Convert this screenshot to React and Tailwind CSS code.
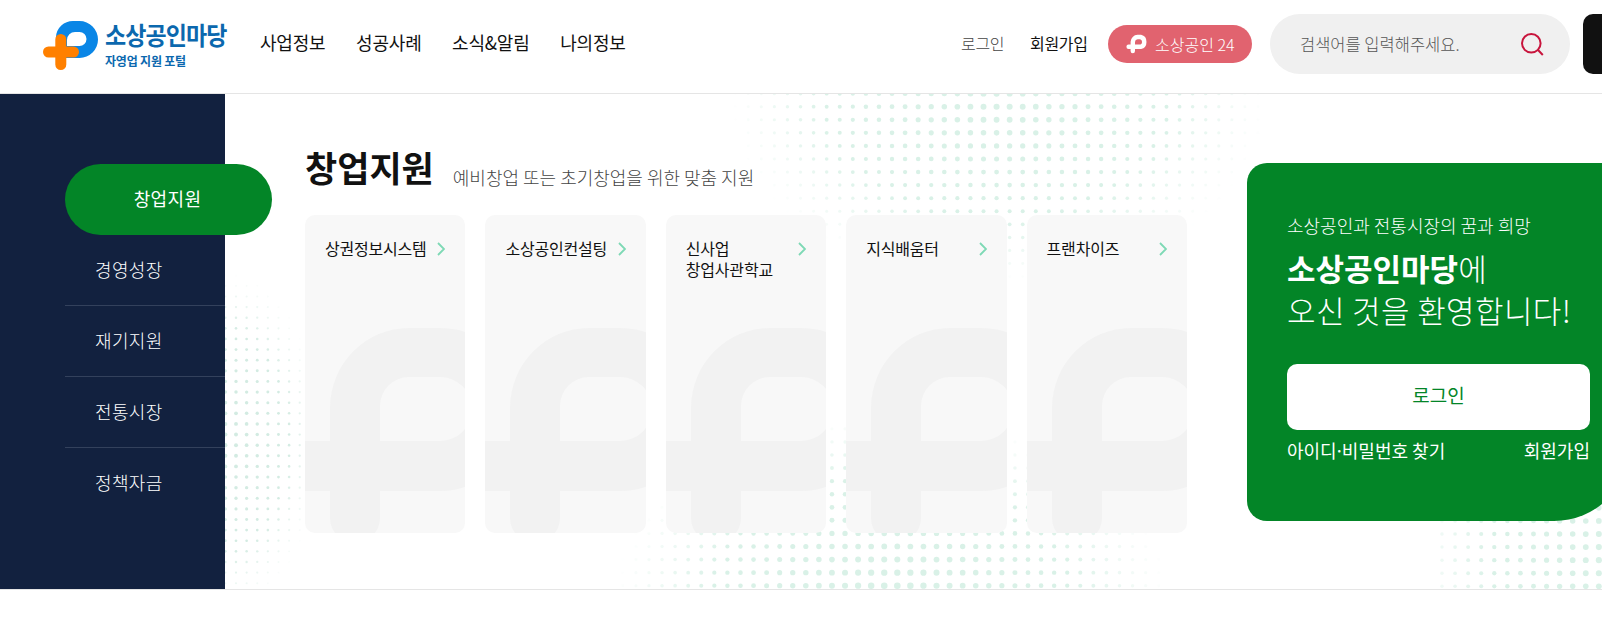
import React from "react";

const navItems = ["사업정보", "성공사례", "소식&알림", "나의정보"];

const sideItems = ["창업지원", "경영성장", "재기지원", "전통시장", "정책자금"];

const cards = [
    ["상권정보시스템"],
    ["소상공인컨설팅"],
    ["신사업", "창업사관학교"],
    ["지식배움터"],
    ["프랜차이즈"],
];

// Halftone clusters behind the main section (section coordinates)
const dotClusters = [
    { x: 944.3, y: 12.7, pitch: 13.07, cx: 998, cy: 8, rx: 268, ry: 180, max: 3.1, color: "#d9f1e7" },
    { x: 858.1, y: 491.7, pitch: 13.07, cx: 892, cy: 500, rx: 276, ry: 180, max: 3.4, color: "#d9f1e7" },
    { x: 1442, y: 492.3, pitch: 13.07, cx: 1640, cy: 462, rx: 235, ry: 175, max: 3.4, color: "#d9f1e7", minX: 1440 },
    { x: 236, y: 319.3, pitch: 10.62, cx: 229, cy: 346, rx: 92, ry: 168, max: 2.1, color: "#d3ebe2" },
];

const getDots = ({ x, y, pitch, cx, cy, rx, ry, max, minX = 226 }) => {
    const dots = [];
    for (let i = -60; i <= 60; i++) {
        for (let j = -60; j <= 60; j++) {
            const px = x + i * pitch;
            const py = y + j * pitch;
            const d = Math.hypot((px - cx) / rx, (py - cy) / ry);
            if (d >= 1 || px < minX - 2 || px > 1606 || py < -4 || py > 500) continue;
            dots.push({ px, py, r: max * (1 - d * 0.58), o: Math.min(1, (1 - d) * 2.8) });
        }
    }
    return dots;
};

const DotBackground = () => (
    <svg className="absolute inset-0" width="1602" height="495" viewBox="0 0 1602 495">
        {dotClusters.map((cluster, i) => (
            <g key={i} fill={cluster.color}>
                {getDots(cluster).map((dot, k) => (
                    <circle key={k} cx={dot.px} cy={dot.py} r={dot.r} opacity={dot.o} />
                ))}
            </g>
        ))}
    </svg>
);

const LogoMark = () => (
    <svg width="56" height="50" viewBox="0 0 56 50" fill="none">
        <path
            fill="#0a86e6"
            fillRule="evenodd"
            d="M13 38V17A17 17 0 0 1 30 1H36.5A18.5 18.5 0 0 1 36.5 38ZM24 26H36.5A7 7 0 0 0 36.5 12H32A8 8 0 0 0 24 20Z"
        />
        <path d="M17.8 19.5V44.5M5.5 32H30.5" stroke="#ff8000" strokeWidth="11" strokeLinecap="round" />
    </svg>
);

const PlusMark = () => (
    <svg width="22" height="20" viewBox="0 0 22 20" fill="none" stroke="#fff" strokeWidth="4.4" strokeLinecap="round">
        <path d="M2.6 12.8H14.6A4.6 5 0 0 0 14.6 3H11.6A5 5 0 0 0 6.8 7.8V17" />
    </svg>
);

const CardMark = () => (
    <svg className="absolute inset-0" width="162" height="318" viewBox="0 0 162 318" fill="#f2f2f2">
        <path
            fillRule="evenodd"
            d="M-10 226H25V193A79 80 0 0 1 104 113H135A81.5 81.5 0 0 1 135 276H75V303A25 25 0 0 1 25 303V276H-10ZM75 226H135A32 32 0 0 0 135 162H104A29 29 0 0 0 75 191Z"
        />
    </svg>
);

const Header = () => (
    <header className="flex h-[94px] w-[1660px] items-start border-b border-[#e5e5e5] bg-white">
        <div className="ml-[43px] flex w-[217px] pt-5">
            <LogoMark />
            <div className="ml-1.5 text-[#0b68ae]">
                <div className="-mt-0.5 origin-top scale-y-[1.08] whitespace-nowrap text-[23px] font-bold leading-[30px] tracking-[-0.9px]">
                    소상공인마당
                </div>
                <div className="mt-1 whitespace-nowrap text-[12px] font-bold leading-[18px] tracking-[-0.2px]">
                    자영업 지원 포털
                </div>
            </div>
        </div>
        <nav className="flex h-[85px] w-[701px] items-center gap-[30.6px] text-[18px] tracking-[-0.2px] text-[#111]">
            {navItems.map((item) => (
                <a key={item}>{item}</a>
            ))}
        </nav>
        <div className="flex h-[88px] items-center">
            <a className="w-[69px] pb-[3px] text-[16px] font-light tracking-[-0.3px] text-[#444]">로그인</a>
            <a className="w-[78px] pb-[3px] text-[16px] tracking-[-0.3px] text-[#111]">회원가입</a>
            <a className="flex h-[38px] w-[144px] items-center gap-[7px] rounded-full bg-[#e1636f] pl-[18px] text-[16px] font-light text-white">
                <PlusMark />
                <span className="pb-px">소상공인 24</span>
            </a>
            <div className="ml-[18px] flex h-[60px] w-[300px] items-center justify-between rounded-full bg-[#f0f0f0] pl-[30px] pr-[26px]">
                <span className="text-[16.5px] font-light text-[#555]">검색어를 입력해주세요.</span>
                <svg width="23" height="23" viewBox="0 0 23 23" fill="none" stroke="#c8143c" strokeWidth="2">
                    <circle cx="10.3" cy="10.3" r="9.3" />
                    <path d="M16.8 16.8L21.8 22" />
                </svg>
            </div>
            <div className="ml-[13px] h-[60px] w-[60px] rounded-[10px] bg-[#111]" />
        </div>
    </header>
);

const SideMenu = () => (
    <aside className="w-[225px] shrink-0 bg-[#12213f] pl-[65px] pt-[70px] text-[18px] font-light tracking-[0.35px] text-white">
        {sideItems.map((item, i) =>
            i === 0 ? (
                <div key={item} className="flex h-[71px] w-[207px] items-center justify-center rounded-full bg-[#038527] pb-[3px] pr-0.5 font-normal">
                    {item}
                </div>
            ) : (
                <div
                    key={item}
                    className="flex h-[71px] items-center border-b border-[#33415c] pb-0.5 pl-[30px] last:border-transparent"
                >
                    {item}
                </div>
            )
        )}
    </aside>
);

const ServiceCard = ({ lines }) => (
    <div className="relative flex h-[318px] items-start justify-between overflow-hidden rounded-[10px] bg-[#f8f8f8] px-5 pt-[23px]">
        <CardMark />
        <div className="relative whitespace-nowrap text-[16px] leading-[21px] tracking-[-0.2px] text-[#111]">
            {lines.map((line) => (
                <div key={line}>{line}</div>
            ))}
        </div>
        <svg className="relative mt-1 shrink-0" width="8" height="14" viewBox="0 0 8 14" fill="none">
            <path d="M1 1L7 7L1 13" stroke="#7ed9b5" strokeWidth="1.8" />
        </svg>
    </div>
);

const LoginBox = () => (
    <div className="ml-[60px] mt-[69px] h-[358px] w-[383px] shrink-0 rounded-[20px] rounded-br-[76px] bg-[#038527] px-10 pt-[49px] text-white">
        <p className="text-[18px] font-light leading-[27px]">소상공인과 전통시장의 꿈과 희망</p>
        <p className="mt-2 whitespace-nowrap text-[31px] font-light leading-[41.6px]">
            <b className="font-bold">소상공인마당</b>에
            <br />
            <span className="tracking-[0.4px]">오신 것을 환영합니다!</span>
        </p>
        <button className="mt-[34px] flex h-[66px] w-[303px] items-center justify-center rounded-[10px] bg-white pb-1 text-[19px] text-[#038527]">
            로그인
        </button>
        <div className="mt-[7px] flex w-[303px] justify-between text-[18px] leading-[27px]">
            <span>
                아이디<span className="-mx-[2.5px]">·</span>비밀번호 찾기
            </span>
            <span>회원가입</span>
        </div>
    </div>
);

const App = () => {
    return (
        <div className="h-[631px] w-full overflow-hidden bg-white font-['Noto_Sans_CJK_KR',sans-serif]">
            <Header />
            <main className="relative h-[496px] w-[1660px] overflow-hidden border-b border-[#e5e5e5]">
                <DotBackground />
                <div className="relative flex h-full">
                    <SideMenu />
                    <section className="ml-20 w-[882px] shrink-0 pt-[49px]">
                        <div className="flex h-[72px] items-start">
                            <h1 className="-mt-px text-[35px] font-bold leading-[50px] text-[#111]">창업지원</h1>
                            <p className="ml-[19px] mt-[21px] text-[18px] font-light leading-[27px] text-[#444]">
                                예비창업 또는 초기창업을 위한 맞춤 지원
                            </p>
                        </div>
                        <div className="grid grid-cols-5 gap-5">
                            {cards.map((lines) => (
                                <ServiceCard key={lines[0]} lines={lines} />
                            ))}
                        </div>
                    </section>
                    <LoginBox />
                </div>
            </main>
        </div>
    );
};

export default App;
